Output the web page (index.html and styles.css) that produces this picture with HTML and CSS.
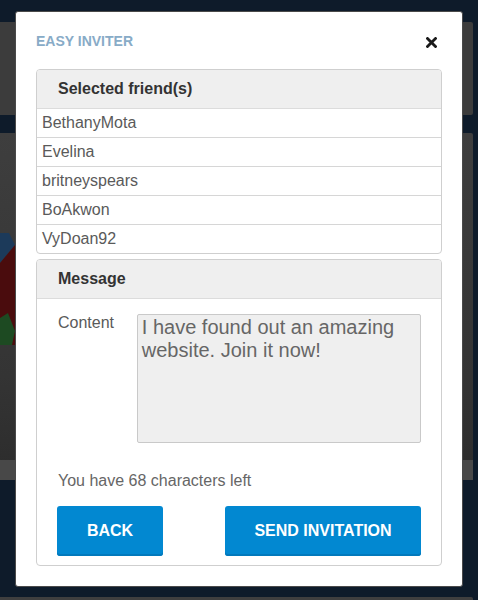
FILE: index.html
```html
<!DOCTYPE html>
<html lang="en">
<head>
    <meta charset="UTF-8">
    <meta name="viewport" content="width=device-width, initial-scale=1.0">
    <title>Easy Inviter</title>
    <link rel="stylesheet" href="styles.css">
</head>
<body>
    <div class="page">
        <div class="card card-top"></div>
        <div class="card card-main">
            <div class="card-art">
                <svg width="15" height="120" viewBox="0 0 15 120">
                    <polygon points="0,0 9,0 15,12 0,30" fill="#1c3a5a"/>
                    <polygon points="0,30 15,12 15,112 0,112" fill="#4a0c0d"/>
                    <polygon points="0,85 8,80 15,98 12,112 0,112" fill="#1d4a22"/>
                </svg>
            </div>
            <div class="card-foot"></div>
        </div>
        <div class="card card-bottom"></div>
    </div>

    <div class="modal">
        <div class="modal-header">
            <span class="modal-title">EASY INVITER</span>
            <svg class="close" width="11" height="11" viewBox="0 0 11 11">
                <path d="M1.5 1.5 L9.5 9.5 M9.5 1.5 L1.5 9.5" stroke="#1a1a1a" stroke-width="2.8" stroke-linecap="square"/>
            </svg>
        </div>

        <div class="panel">
            <div class="panel-heading">Selected friend(s)</div>
            <ul class="friend-list">
                <li>BethanyMota</li>
                <li>Evelina</li>
                <li>britneyspears</li>
                <li>BoAkwon</li>
                <li>VyDoan92</li>
            </ul>
        </div>

        <div class="panel panel-message">
            <div class="panel-heading">Message</div>
            <div class="panel-body">
                <div class="field">
                    <label for="content">Content</label>
                    <textarea id="content">I have found out an amazing website. Join it now!</textarea>
                </div>
                <p class="counter">You have 68 characters left</p>
                <div class="actions">
                    <button class="btn btn-back">BACK</button>
                    <button class="btn btn-send">SEND INVITATION</button>
                </div>
            </div>
        </div>
    </div>
</body>
</html>
```

FILE: styles.css
```css
body { margin: 0; background: #0e1b2a; font-family: "Liberation Sans", Arial, sans-serif; height: 600px; overflow: hidden; }

/* dimmed page behind the dialog */
.page { width: 473px; padding-top: 22px; }
.card { background: #3c3c3c; border-radius: 0 2px 2px 0; }
.card-top { height: 93px; }
.card-main { margin-top: 18px; height: 347px; display: flex; flex-direction: column; background: linear-gradient(#3e3e3e, #343434 70%, #2c2c2c); }
.card-art { flex: 1; padding-top: 100px; }
.card-art svg { display: block; }
.card-foot { height: 20px; background: #484848; }
.card-bottom { margin-top: 117px; height: 20px; background: #3f3f3f; }

/* dialog */
.modal { position: fixed; top: 11px; left: 15px; width: 448px; box-sizing: border-box; background: #fff; border: 1px solid #4a4a4a; border-radius: 3px; padding: 0 20px 20px; }
.modal-header { height: 57px; display: flex; align-items: center; justify-content: space-between; padding-top: 1px; box-sizing: border-box; }
.modal-title { color: #88abc7; font-weight: bold; font-size: 14px; }
.close { margin-right: 5px; margin-top: 2px; }

.panel { border: 1px solid #cfcfcf; border-radius: 4px; overflow: hidden; }
.panel-heading { height: 38px; line-height: 38px; background: #efefef; border-bottom: 1px solid #dcdcdc; padding-left: 21px; font-weight: bold; font-size: 16px; color: #333; }
.panel-message { margin-top: 5px; }

.friend-list { list-style: none; margin: 0; padding: 0; }
.friend-list li { height: 28px; line-height: 28px; padding-left: 5px; border-bottom: 1px solid #d6d6d6; font-size: 16px; color: #5a5a5a; }
.friend-list li:last-child { border-bottom: none; }

.panel-body { padding: 15px 20px 9px 20px; }
.field { display: flex; }
.field label { width: 79px; padding-left: 1px; font-size: 16px; color: #5a5a5a; line-height: 18px; }
.field textarea { width: 285px; height: 129px; box-sizing: border-box; margin: 0; padding: 1px 4px; background: #efefef; border: 1px solid #c9c9c9; border-radius: 2px; font-family: "Liberation Sans", Arial, sans-serif; font-size: 20px; line-height: 23px; color: #666; resize: none; }
.counter { margin: 29px 0 0 1px; font-size: 16px; line-height: 18px; color: #666; }
.actions { display: flex; justify-content: space-between; margin-top: 16px; }
.btn { height: 50px; border: none; border-radius: 3px; background: #0288d1; box-shadow: inset 0 -2px 0 #0279bc; color: #fff; font-family: "Liberation Sans", Arial, sans-serif; font-weight: bold; font-size: 16px; cursor: pointer; }
.btn-back { width: 106px; }
.btn-send { width: 196px; }
```
